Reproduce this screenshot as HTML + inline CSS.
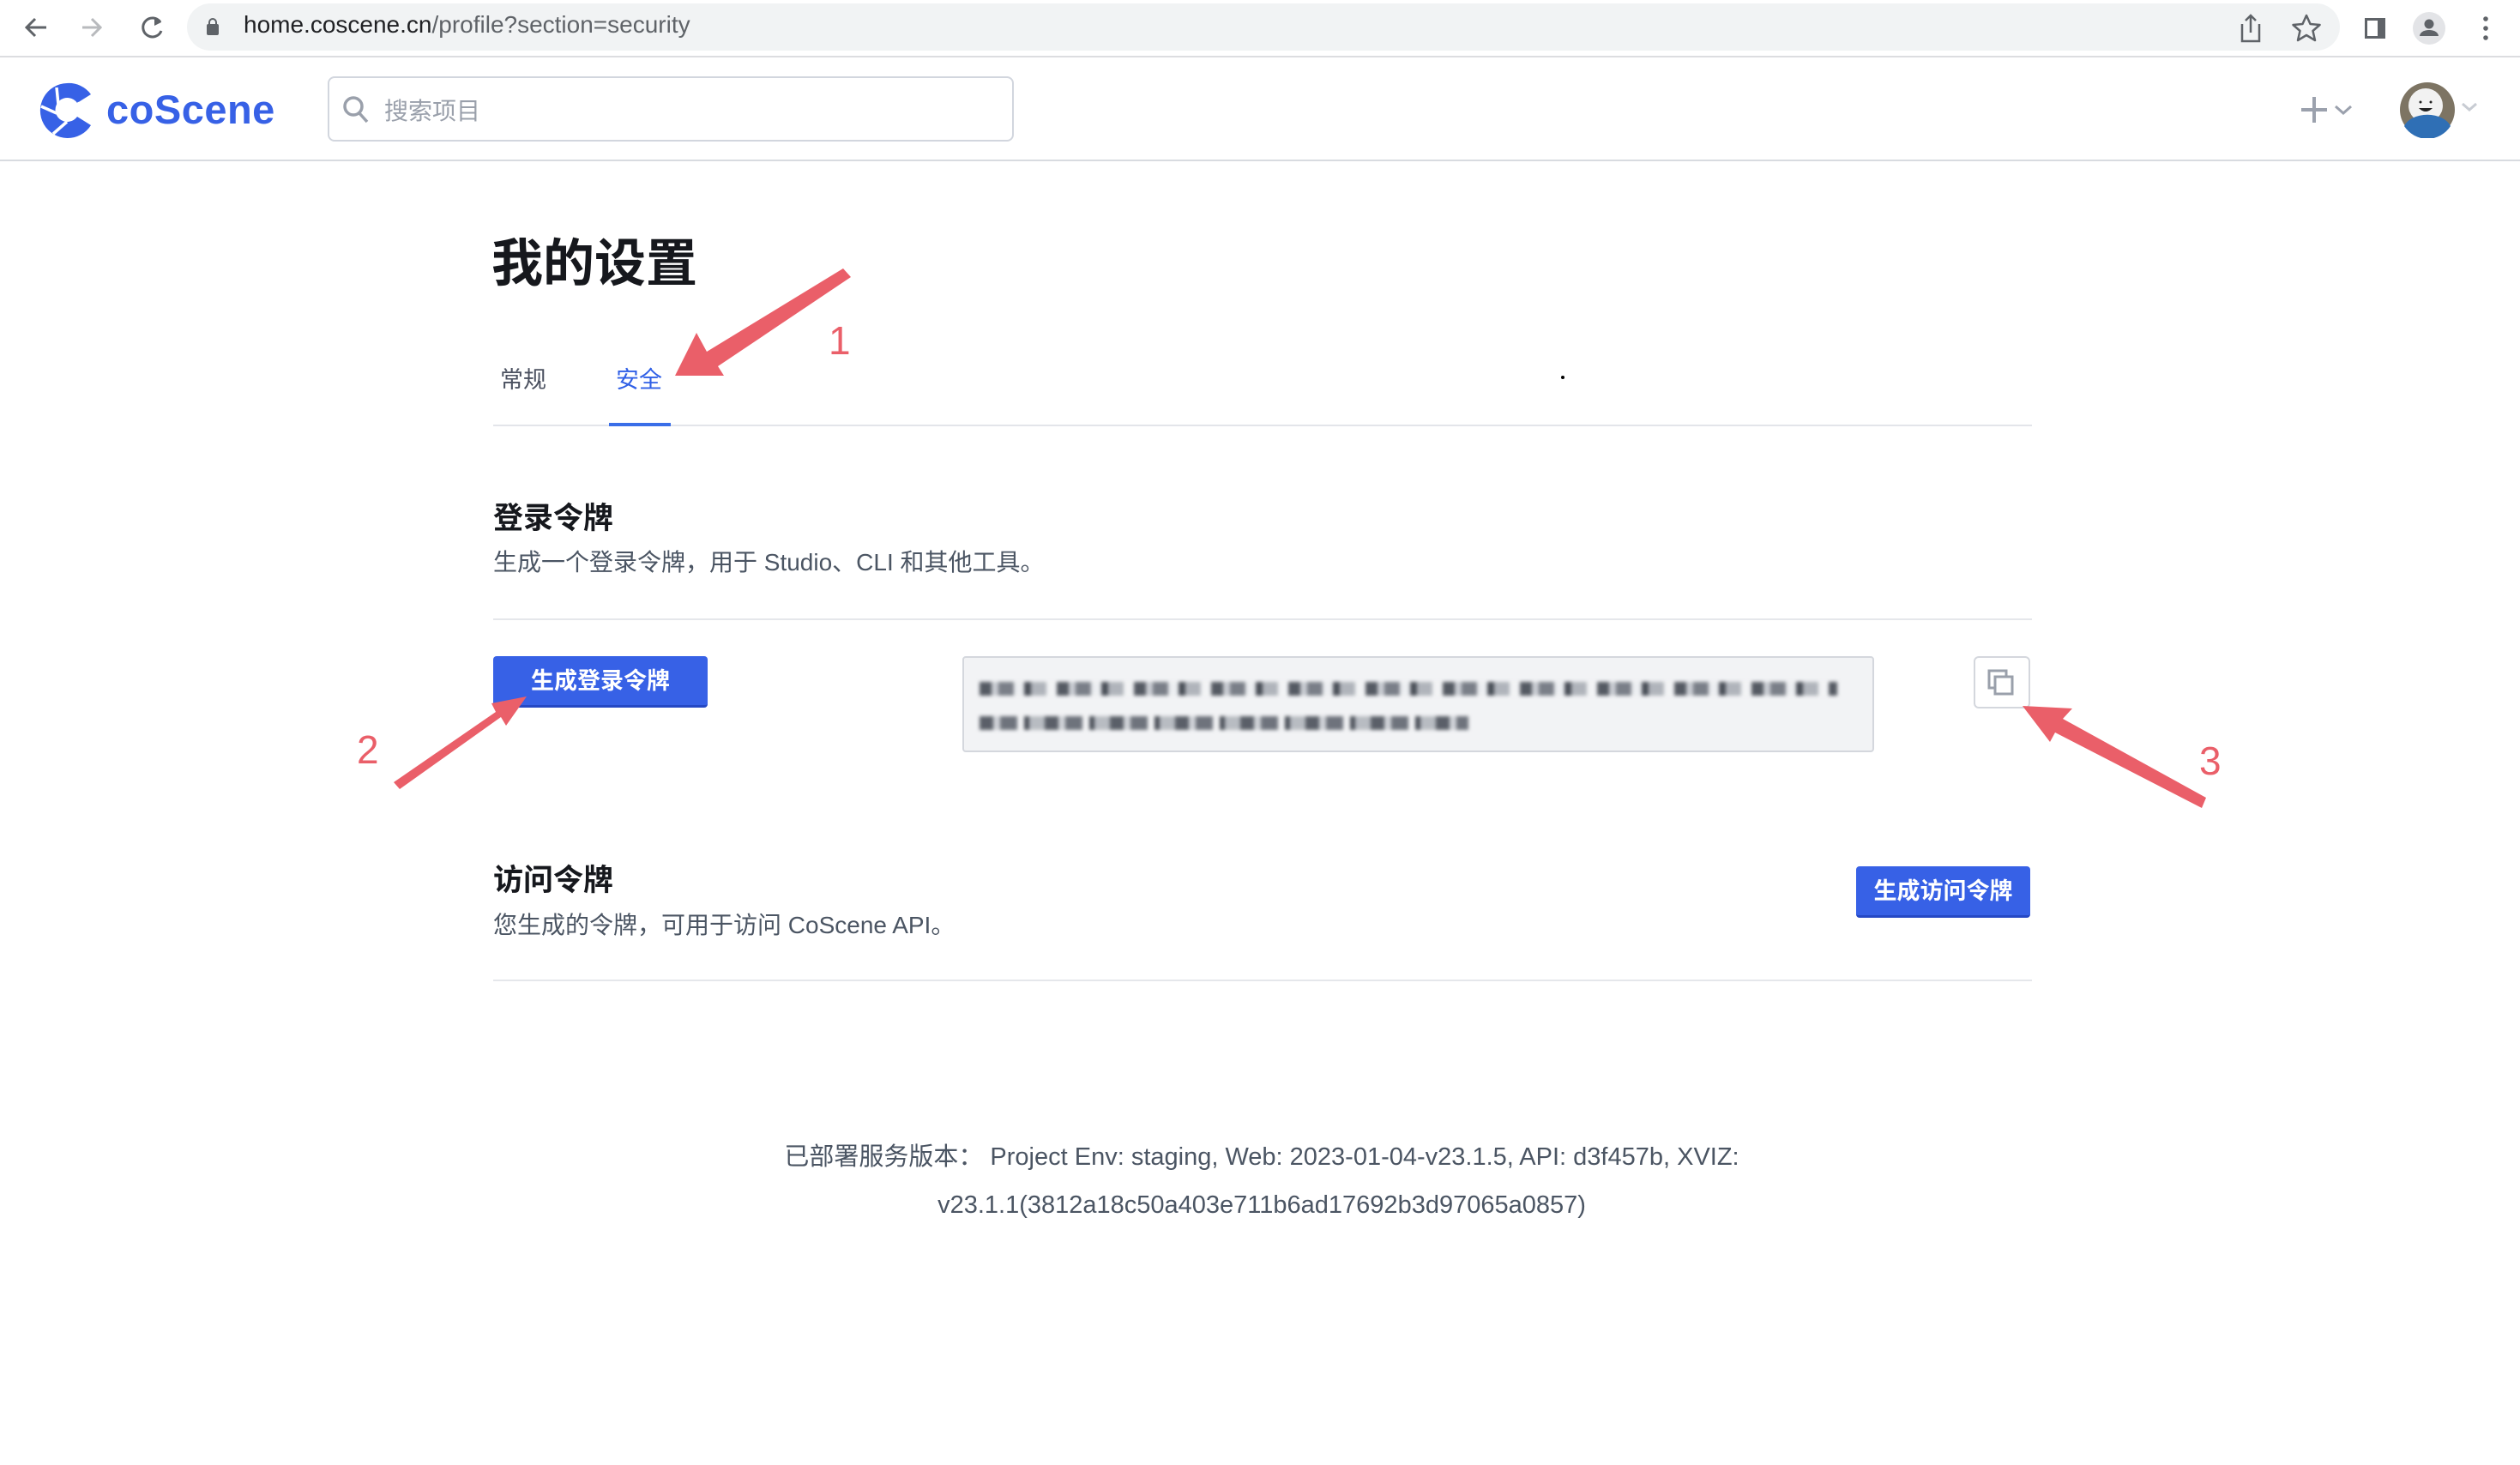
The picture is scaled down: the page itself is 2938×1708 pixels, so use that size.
<!DOCTYPE html>
<html><head><meta charset="utf-8"><style>
*{margin:0;padding:0;box-sizing:border-box}
body{width:2938px;height:1708px;background:#fff;position:relative;overflow:hidden;font-family:"Liberation Sans","Noto Sans CJK SC",sans-serif}
.a{position:absolute}
.cn{font-family:"Liberation Sans","Noto Sans CJK SC",sans-serif}
</style></head><body>
<div class="a" style="left:0;top:0;width:2938px;height:67px;background:#fff;border-bottom:2px solid #dcdde0"></div>
<svg class="a" style="left:20px;top:12px" width="180" height="42" viewBox="0 0 180 42">
<path d="M34 20H12M21 10L11 20L21 30" stroke="#5f6368" stroke-width="3" fill="none"/>
<path d="M98 20H76M87 10L97 20L87 30" stroke="#b8babd" stroke-width="3" fill="none"/>
<path d="M167 14A11 11 0 1 0 168 24" stroke="#5f6368" stroke-width="3" fill="none"/><path d="M160 8L168 14L160 18Z" fill="#5f6368"/>
</svg>
<div class="a" style="left:218px;top:4px;width:2510px;height:55px;border-radius:28px;background:#f1f3f4"></div>
<svg class="a" style="left:240px;top:20px" width="16" height="22"><rect x="1" y="8" width="14" height="13" rx="2" fill="#5f6368"/><path d="M4 9V6a4 4 0 0 1 8 0v3" stroke="#5f6368" stroke-width="2" fill="none"/></svg>
<div class="a" style="left:284px;top:13px;font-size:28px;color:#202124">home.coscene.cn<span style="color:#5f6368">/profile?section=security</span></div>
<svg class="a" style="left:2610px;top:14px" width="300" height="38" viewBox="0 0 300 38">
<path d="M4 14v20h20V14M14 4v20M8 10l6-6 6 6" stroke="#5f6368" stroke-width="2.5" fill="none"/>
<path d="M79 4l4.5 10 11 1-8 7 2.5 11-10-6-10 6 2.5-11-8-7 11-1z" stroke="#5f6368" stroke-width="2.5" fill="none" stroke-linejoin="round"/>
<rect x="147" y="7" width="24" height="24" fill="#5f6368"/><rect x="150" y="10" width="12" height="18" fill="#fff"/>
<circle cx="222" cy="19" r="19" fill="#e3e4e7"/><circle cx="222" cy="14" r="5.5" fill="#5f6368"/><path d="M211 28a11 7 0 0 1 22 0z" fill="#5f6368"/>
<circle cx="288" cy="8" r="2.8" fill="#5f6368"/><circle cx="288" cy="19" r="2.8" fill="#5f6368"/><circle cx="288" cy="30" r="2.8" fill="#5f6368"/>
</svg>
<div class="a" style="left:0;top:186px;width:2938px;height:2px;background:#d8dbe0"></div>
<svg class="a" style="left:46px;top:96px" width="64" height="66" viewBox="0 0 64 66">
<path d="M32 1A32 32 0 1 0 60 50L44 40A14 14 0 1 1 44 24L60 14A32 32 0 0 0 32 1Z" fill="#3761e6"/>
<g stroke="#fff" stroke-width="3.5"><path d="M20 6L22 26"/><path d="M2 28L20 36"/><path d="M16 60L32 46"/><path d="M44 24L52 30"/></g>
</svg>
<div class="a" style="left:124px;top:100px;font-size:47px;font-weight:bold;color:#3761e6;letter-spacing:0.5px">coScene</div>
<div class="a" style="left:382px;top:89px;width:800px;height:76px;border:2px solid #d2d6de;border-radius:8px"></div>
<svg class="a" style="left:398px;top:110px" width="34" height="36"><circle cx="14" cy="14" r="10" stroke="#9aa0ab" stroke-width="3.5" fill="none"/><path d="M21 22l9 10" stroke="#9aa0ab" stroke-width="3.5"/></svg>
<div class="a cn" style="left:448px;top:108px;font-size:28px;color:#9aa0ab">搜索项目</div>
<svg class="a" style="left:2680px;top:110px" width="70" height="36"><path d="M18 3v30M3 18h30" stroke="#9ba1ad" stroke-width="4"/><path d="M43 14l9 8 9-8" stroke="#9ba1ad" stroke-width="3" fill="none"/></svg>
<svg class="a" style="left:2797px;top:95px" width="100" height="66" viewBox="0 0 100 66">
<circle cx="33" cy="33" r="32" fill="#7d7463"/><circle cx="31" cy="28" r="20" fill="#f2f2f2"/><path d="M6 52a28 18 0 0 1 54 0A32 32 0 0 1 6 52z" fill="#2f6fb5"/>
<circle cx="25" cy="24" r="1.5" fill="#222"/><circle cx="37" cy="24" r="1.5" fill="#222"/><path d="M23 31q8 8 16 0z" fill="#222"/>
<path d="M74 26l8 7 8-7" stroke="#c8ccd3" stroke-width="3" fill="none"/></svg>
<div class="a cn" style="left:573px;top:259px;font-size:60px;font-weight:bold;color:#16181d">我的设置</div>
<div class="a cn" style="left:583px;top:421px;font-size:27px;color:#4b5160">常规</div>
<div class="a cn" style="left:718px;top:421px;font-size:27px;color:#2f5fe6">安全</div>
<div class="a" style="left:575px;top:495px;width:1794px;height:2px;background:#e3e5ea"></div>
<div class="a" style="left:710px;top:493px;width:72px;height:4px;background:#3a6ee8"></div>
<div class="a" style="left:1820px;top:438px;width:4px;height:4px;background:#000;border-radius:2px"></div>

<div class="a cn" style="left:575px;top:576px;font-size:35px;font-weight:bold;color:#16181d">登录令牌</div>
<div class="a cn" style="left:575px;top:634px;font-size:28px;color:#4b5563">生成一个登录令牌，用于 Studio、CLI 和其他工具。</div>
<div class="a" style="left:575px;top:721px;width:1794px;height:2px;background:#e5e7eb"></div>
<div class="a cn" style="left:575px;top:765px;width:250px;height:60px;background:#3761e6;border-radius:4px;border-bottom:3px solid #2548c4;color:#fff;font-size:27px;font-weight:bold;text-align:center;line-height:58px">生成登录令牌</div>
<div class="a" style="left:1122px;top:765px;width:1063px;height:112px;background:#f2f3f5;border:2px solid #d4d7dd;border-radius:4px;overflow:hidden">
 <div style="position:absolute;left:18px;top:28px;width:1000px;height:16px;filter:blur(2px);background:repeating-linear-gradient(90deg,#555a63 0 14px,#c9ccd2 14px 22px,#7a7f88 22px 40px,#eceef1 40px 52px,#4a4f58 52px 60px,#b0b4bb 60px 78px,#f2f3f5 78px 90px)"></div>
 <div style="position:absolute;left:18px;top:68px;width:570px;height:16px;filter:blur(2px);background:repeating-linear-gradient(90deg,#5a5f68 0 16px,#d0d3d8 16px 24px,#6e737c 24px 44px,#f2f3f5 44px 52px,#4a4f58 52px 58px,#b8bcc2 58px 76px)"></div>
</div>
<div class="a" style="left:2301px;top:765px;width:66px;height:61px;border:2px solid #d4d7dd;border-radius:6px;background:#fff"></div>
<svg class="a" style="left:2315px;top:778px" width="40" height="36"><rect x="4" y="4" width="20" height="20" fill="none" stroke="#9aa0ab" stroke-width="3"/><rect x="11" y="11" width="20" height="20" fill="#fff" stroke="#9aa0ab" stroke-width="3"/></svg>

<div class="a cn" style="left:575px;top:998px;font-size:35px;font-weight:bold;color:#16181d">访问令牌</div>
<div class="a cn" style="left:575px;top:1057px;font-size:28px;color:#4b5563">您生成的令牌，可用于访问 CoScene API。</div>
<div class="a cn" style="left:2164px;top:1010px;width:203px;height:60px;background:#3761e6;border-radius:4px;border-bottom:3px solid #2548c4;color:#fff;font-size:27px;font-weight:bold;text-align:center;line-height:58px">生成访问令牌</div>
<div class="a" style="left:575px;top:1142px;width:1794px;height:2px;background:#e5e7eb"></div>

<div class="a cn" style="left:0;top:1321px;width:2942px;text-align:center;font-size:29px;color:#4b5563;line-height:56px">已部署服务版本： Project Env: staging, Web: 2023-01-04-v23.1.5, API: d3f457b, XVIZ:<br>v23.1.1(3812a18c50a403e711b6ad17692b3d97065a0857)</div>

<svg class="a" style="left:0;top:0" width="2938" height="1708">
<g fill="#ea5f69">
<path d="M983 313L992 323L837 427L844 438L787 438L812 388L824 410Z"/>
<path d="M459 912L466 920L584 836L590 846L614 812L573 820L578 830Z"/>
<path d="M2572 930L2567 942L2396 854L2390 865L2358 823L2416 826L2405 838Z"/>
</g>
<g fill="#ea5f69" font-family="Liberation Sans,sans-serif" font-size="46">
<text x="966" y="413">1</text><text x="416" y="890">2</text><text x="2564" y="903">3</text></g>
</svg>
</body></html>
